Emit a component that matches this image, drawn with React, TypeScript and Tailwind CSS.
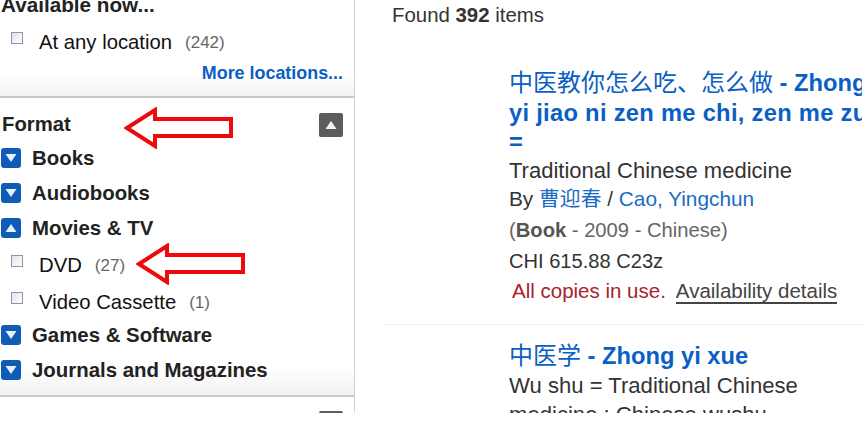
const SANS = { fontFamily: '"Liberation Sans", "Noto Sans CJK SC", sans-serif' };

function Check() {
  return <span className="mt-[2px] h-[12px] w-[12px] shrink-0 border border-[#8c97a6] bg-gradient-to-br from-[#dfe4ec] to-[#ffffff]" />;
}

function Toggle({ open }: { open?: boolean }) {
  return (
    <span className="flex h-[20px] w-[20px] shrink-0 items-center justify-center rounded-[3px] bg-[#0f5cb8]">
      <svg width="12" height="10" viewBox="0 0 12 10">
        <path d={open ? "M6 1 L11.5 9 H0.5 Z" : "M0.5 1 H11.5 L6 9 Z"} fill="#e8f0fa" />
      </svg>
    </span>
  );
}

function Group({ label, open }: { label: string; open?: boolean }) {
  return (
    <div className="flex h-[35px] items-center gap-[11px] pl-[1px]">
      <Toggle open={open} />
      <span className="pt-[2px] text-[20.4px] font-bold text-[#222]">{label}</span>
    </div>
  );
}

function Option({ label, count, h }: { label: string; count: string; h: string }) {
  return (
    <div className={`flex items-start pl-[11px] ${h}`}>
      <Check />
      <span className="ml-[16px] text-[20.3px] leading-[24px] text-[#111]">{label}</span>
      <span className="ml-[13px] text-[17px] leading-[26px] text-[#666]">{count}</span>
    </div>
  );
}

function Arrow({ className }: { className: string }) {
  return (
    <svg className={className} width="110" height="42" viewBox="0 0 110 42">
      <path d="M3 21 L31 3 V12 H107 V29 H31 V39 Z" fill="#fff" stroke="#ee0a0a" strokeWidth="4" />
    </svg>
  );
}

export default function App() {
  return (
    <div className="relative flex h-[413px] w-[862px] overflow-hidden bg-white" style={SANS}>
      <aside className="w-[355px] shrink-0 border-r border-[#d4d4d4]">
        <div className="-mt-[7px] h-[105px] border-b-2 border-[#c9c9c9] bg-gradient-to-b from-white from-80% to-[#f2f2f2]">
          <div className="pl-[1px] text-[20.7px] font-bold leading-[24px] text-[#222]">Available now...</div>
          <div className="mt-[13px]">
            <Option label="At any location" count="(242)" h="h-[32px]" />
          </div>
          <div className="pr-[11px] text-right text-[17.9px] font-bold leading-[22px] text-[#0b5fc4]">More locations...</div>
        </div>

        <div className="h-[299px] border-b-2 border-[#c9c9c9] bg-gradient-to-b from-white from-90% to-[#f2f2f2]">
          <div className="flex h-[42px] items-end justify-between pb-[4px] pl-[2px] pr-[11px]">
            <span className="text-[20.3px] font-bold leading-[24px] text-[#222]">Format</span>
            <span className="mb-[-1px] flex h-[24px] w-[24px] items-center justify-center rounded-[2px] bg-[#5c5c5c]">
              <svg width="12" height="10" viewBox="0 0 12 10">
                <path d="M6 1 L11.5 9 H0.5 Z" fill="#f2f2f2" />
              </svg>
            </span>
          </div>
          <Group label="Books" />
          <Group label="Audiobooks" />
          <Group label="Movies & TV" open />
          <div className="pt-[8px]">
            <Option label="DVD" count="(27)" h="h-[37px]" />
            <Option label="Video Cassette" count="(1)" h="h-[27px]" />
          </div>
          <Group label="Games & Software" />
          <Group label="Journals and Magazines" />
        </div>
        <div className="flex justify-end pr-[11px] pt-[14px]">
          <span className="h-[24px] w-[24px] rounded-[2px] bg-[#5c5c5c]" />
        </div>
      </aside>

      <main className="min-w-0 flex-1 overflow-hidden pl-[27px]">
        <div className="pl-[10px] pt-[3px] text-[20.4px] leading-[24px] text-[#333]">
          Found <b>392</b> items
        </div>
        <div className="pl-[127px] pt-[41px]">
          <div className="whitespace-nowrap text-[23.7px] font-bold leading-[30px] text-[#0b5fc4]">
            <span className="text-[24px] font-normal">中医教你怎么吃、怎么做</span> - Zhong
            <br />
            <span className="tracking-[0.3px]">yi jiao ni zen me chi, zen me zuo</span>
          </div>
          <div className="text-[23.7px] font-bold leading-[29px] text-[#0b5fc4]">=</div>
          <div className="text-[22px] leading-[28px] text-[#333]">Traditional Chinese medicine</div>
          <div className="text-[20.8px] leading-[28px] text-[#333]">
            By <span className="text-[#1a6cc4]">曹迎春</span> / <span className="text-[#1a6cc4]">Cao, Yingchun</span>
          </div>
          <div className="mt-[2px] text-[20.2px] leading-[30px] text-[#666]">
            (<b className="text-[#555]">Book</b> - 2009 - Chinese)
          </div>
          <div className="mt-[1px] text-[20.1px] leading-[30px] text-[#333]">CHI 615.88 C23z</div>
          <div className="whitespace-nowrap pl-[3px] text-[20.5px] leading-[30px] text-[#a8232c]">
            All copies in use.
            <span className="ml-[10px] border-b-2 border-[#444] text-[#444]">Availability details</span>
          </div>
        </div>
        <div className="mt-[18px] border-t border-[#efefef] pl-[127px] pt-[16px]">
          <div className="text-[23.7px] font-bold leading-[29px] text-[#0b5fc4]">
            <span className="text-[24px] font-normal">中医学</span> - Zhong yi xue
          </div>
          <div className="w-[310px] text-[22.1px] leading-[29px] text-[#333]">
            Wu shu = Traditional Chinese medicine : Chinese wushu
          </div>
        </div>
      </main>

      <Arrow className="absolute left-[124px] top-[107px]" />
      <Arrow className="absolute left-[136px] top-[243px]" />
    </div>
  );
}
